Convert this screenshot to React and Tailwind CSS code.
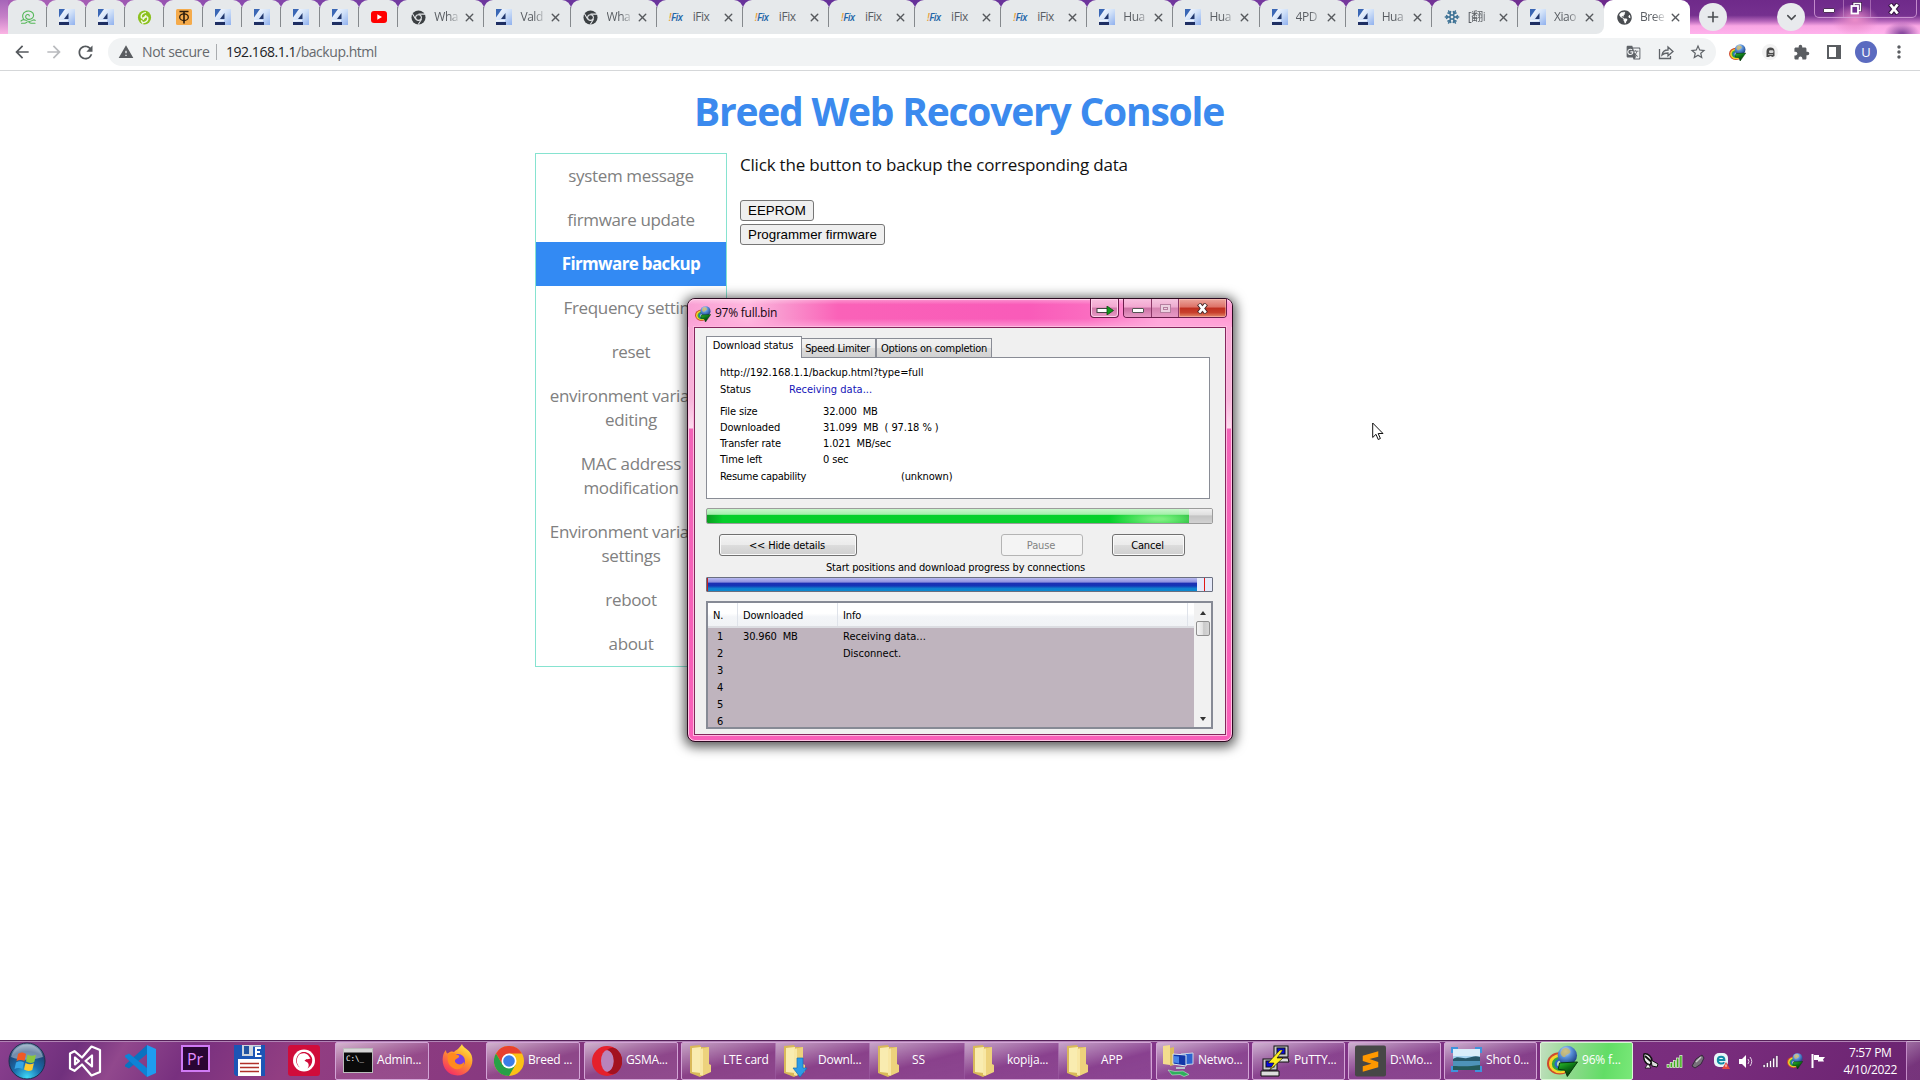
import React from "react";
import { MdArrowBack, MdArrowForward, MdRefresh, MdWarning, MdStarBorder, MdExtension, MdMoreVert, MdGTranslate } from "react-icons/md";
import { FaGlobeAmericas } from "react-icons/fa";
import { X, Plus, ChevronDown, Snowflake } from "lucide-react";

const UI = "font-['Open_Sans','Noto_Sans','Noto_Sans_CJK_SC',sans-serif]";
const DLG = "font-['DejaVu_Sans_Condensed','DejaVu_Sans',sans-serif]";

/* ---------- favicons ---------- */
function FourPda() {
  return (
    <svg width="16" height="16" viewBox="0 0 16 16">
      <defs>
        <linearGradient id="pda" x1="0" y1="0" x2="1" y2="1">
          <stop offset="0" stopColor="#ffffff" />
          <stop offset="0.5" stopColor="#cfe0f8" />
          <stop offset="1" stopColor="#8fb0ee" />
        </linearGradient>
      </defs>
      <rect width="16" height="16" fill="url(#pda)" />
      <path d="M0 0h6L0 8.500z" fill="#3a67b5" />
      <path d="M9.500 4v6H5z" fill="#22386e" />
      <path d="M0 11h9V12.500H0z" fill="#eef4fd" />
      <path d="M0 13h10v3H0z" fill="#1f2f63" />
    </svg>
  );
}
function GreyChrome() {
  return (
    <svg width="15" height="15" viewBox="0 0 16 16">
      <circle cx="8" cy="8" r="7.500" fill="#3c4043" />
      <circle cx="8" cy="8" r="3.600" fill="#e8eaed" />
      <circle cx="8" cy="8" r="2.500" fill="#3c4043" />
      <path d="M8 4.400h7M5 9.900 1.600 4M11.200 9.800 7.700 15.500" stroke="#e8eaed" strokeWidth="1.100" />
    </svg>
  );
}
function IFix() {
  return (
    <span className={`${UI} w-[17px] text-[10px] leading-4 font-semibold italic tracking-[-0.5px] whitespace-nowrap text-[#1f66a8]`}>
      <span className="text-[#e8a33a]">!</span>Fix
    </span>
  );
}
function GreenSnail() {
  return (
    <svg width="16" height="14" viewBox="0 0 16 14" fill="none" stroke="#56b85a" strokeWidth="1.100" strokeLinecap="round">
      <path d="M1 11c1.500-1.600 3.500-1.600 5-.6 2 1.300 4.500 1.300 6.500 0 1-.7 2-.7 2.700 0M1.500 13.200h3.500l2-1M15 13.200h-4l-2-.7M3.500 9C2 6.500 2.500 2.500 6 1.400 10 .3 13.500 2 13.600 5c.1 2.500-2 4.500-4.600 4.400-2.600 0-4-2.200-3-3.900 1-1.500 3.200-1.200 3.300.4" />
    </svg>
  );
}
function GreenSwirl() {
  return (
    <svg width="15" height="15" viewBox="0 0 16 16">
      <ellipse cx="8" cy="8" rx="7" ry="7.500" fill="#8cc11f" />
      <path d="M9.500 2.500C6 3 4 5 4.500 7.500S9 8 9.500 5.500M6.500 13.500c3.500-.5 5.500-2.500 5-5S7 8 6.500 10.500M4.500 11l2 3.500" fill="none" stroke="#f4f9e6" strokeWidth="1.500" />
    </svg>
  );
}
function OrangeT() {
  return (
    <svg width="16" height="16" viewBox="0 0 16 16">
      <rect width="16" height="16" rx="1.500" fill="#f5ab4b" />
      <path d="M3.500 2.500h9M8 2.500v12" stroke="#2b1c0c" strokeWidth="1.600" />
      <ellipse cx="8" cy="8.200" rx="4.300" ry="3.400" fill="none" stroke="#2b1c0c" strokeWidth="1.300" />
    </svg>
  );
}
function YouTube() {
  return (
    <svg width="16" height="12" viewBox="0 0 16 12">
      <rect width="16" height="12" rx="3" fill="#f00" />
      <path d="M6.300 3.300v5.400L11 6z" fill="#fff" />
    </svg>
  );
}
function Idm({ size = 16 }) {
  return (
    <svg width={size} height={size} viewBox="0 0 32 32">
      <defs>
        <radialGradient id="globe" cx="0.4" cy="0.28" r="0.8">
          <stop offset="0" stopColor="#e3efff" />
          <stop offset="0.4" stopColor="#5b93da" />
          <stop offset="1" stopColor="#0f2f74" />
        </radialGradient>
        <linearGradient id="arrow" x1="0" y1="0" x2="0.6" y2="1">
          <stop offset="0" stopColor="#2fc52f" />
          <stop offset="0.5" stopColor="#0d7416" />
          <stop offset="1" stopColor="#03300a" />
        </linearGradient>
      </defs>
      <ellipse cx="13" cy="18.500" rx="13" ry="11.500" fill="#cf4a2c" />
      <ellipse cx="13.500" cy="18.700" rx="11.400" ry="9.900" fill="#f2d62c" />
      <ellipse cx="14" cy="19" rx="9" ry="7.500" fill="#35a83f" />
      <ellipse cx="14.500" cy="19" rx="6.800" ry="5.500" fill="#2a68c8" />
      <ellipse cx="15" cy="19" rx="4.800" ry="3.700" fill="#b9dcb9" />
      <circle cx="21" cy="10.300" r="10" fill="url(#globe)" />
      <path d="M16 3.500c4-2 7 0 8 2.500s-4 2.500-5 5-5-.5-5-3.500z" fill="#c9b766" opacity=".8" />
      <path d="M13 18l18.500-1L21 32l-2.500-6.500-7-1z" fill="url(#arrow)" stroke="#06380a" strokeWidth="1" />
    </svg>
  );
}

/* ---------- tab strip ---------- */
const pinned = [GreenSnail, FourPda, FourPda, GreenSwirl, OrangeT, FourPda, FourPda, FourPda, FourPda, YouTube];
const tabs = [
  [GreyChrome, "Wha"], [FourPda, "Vald"], [GreyChrome, "Wha"],
  [IFix, "iFix"], [IFix, "iFix"], [IFix, "iFix"], [IFix, "iFix"], [IFix, "iFix"],
  [FourPda, "Hua"], [FourPda, "Hua"], [FourPda, "4PD"], [FourPda, "Hua"],
  [() => <Snowflake size={16} strokeWidth={2.500} color="#3f7396" />, "[翻i"], [FourPda, "Xiao"],
];

function Tab({ Icon, text, active }) {
  return (
    <div className={`relative flex h-full w-[86.14px] flex-none items-center rounded-t-[9px] pl-3 ${active ? "bg-white" : "bg-[#e6e9eb]"}`}>
      <span className="flex w-4 flex-none justify-center"><Icon /></span>
      <span className={`ml-2 w-[27px] flex-none text-[12px] tracking-[-0.45px] whitespace-nowrap text-[#5a5e63] ${text === "iFix" ? "" : "[mask-image:linear-gradient(to_right,black_50%,transparent_100%)]"}`}>{text}</span>
      <X size={13} strokeWidth={2.600} className="ml-[2px] flex-none text-[#56595d]" />
    </div>
  );
}
const Sep = () => <span className="absolute top-[7px] right-0 h-5 w-px bg-[#85898d]" />;

function TabStrip() {
  return (
    <div className="flex h-[34px] bg-[linear-gradient(90deg,#a85fb5_0,#a45cb4_90px,#8a4aae_240px,#6f389f_420px,#653099_900px,#77399f_1300px,#6d2a8c_1600px,#6f2b8a_1920px)]">
      <div className="h-full w-2 flex-none bg-[linear-gradient(180deg,#a565b8,#c680c8_50%,#fbb4e4)]" />
      {pinned.map((Icon, i) => (
        <div key={i} className="relative flex h-full w-[39.04px] flex-none items-center justify-center rounded-t-[9px] bg-[#e6e9eb]">
          <Icon />
          <Sep />
        </div>
      ))}
      {tabs.map(([Icon, text], i) => (
        <div key={i} className={`relative h-full ${i === 13 ? "bg-[linear-gradient(180deg,transparent_60%,white_60%)]" : ""}`}>
          <div className={`h-full ${i === 13 ? "overflow-hidden rounded-br-[8px]" : ""}`}><Tab Icon={Icon} text={text} /></div>
          {i < 13 && <Sep />}
        </div>
      ))}
      <Tab active Icon={() => <FaGlobeAmericas size={15} color="#4a4d51" />} text="Bree" />
      <div className="flex h-full grow items-start bg-[radial-gradient(ellipse_24px_16px_at_165px_20px,#e88ac8_5%,transparent),radial-gradient(ellipse_18px_12px_at_212px_34px,#8a4aa0_10%,transparent),linear-gradient(180deg,#6f2a8a_0,#75308f_45%,#b565ba_62%,#f9a6e4_76%,#ffb2ec_100%)]">
        <span className="mt-[3px] ml-[9px] flex size-7 flex-none items-center justify-center rounded-full bg-[#e8eaed] text-[#4a4d51]"><Plus size={16} strokeWidth={2.400} /></span>
        <span className="mt-[3px] ml-[50px] flex size-7 flex-none items-center justify-center rounded-full bg-[#e8eaed] text-[#4a4d51]"><ChevronDown size={15} strokeWidth={2.400} /></span>
        <span className="ml-[9px] flex h-[18px] w-[103px] flex-none rounded-b-[5px] border border-t-0 border-[#d9a3dc]/80 text-white">
          <span className="flex w-[29px] items-start justify-center border-r border-[#c58cc9]/60 pt-2"><span className="h-[5px] w-3 rounded-[1px] border border-[#50305a] bg-white" /></span>
          <span className="flex w-[27px] items-center justify-center border-r border-[#c58cc9]/60 pr-[3px]">
            <svg width="12" height="13" viewBox="0 0 12 13" fill="none"><path d="M4 4V1h7v7H8" stroke="#3a1846" strokeWidth="3" /><path d="M4 3.500V1.500h6.500v7H8" stroke="#fff" strokeWidth="1.400" /><rect x="1.500" y="4" width="6.500" height="7.500" fill="#6d2a8c" stroke="#fff" strokeWidth="1.800" /></svg>
          </span>
          <span className="flex grow items-center justify-center">
            <svg width="14" height="12" viewBox="0 0 14 12"><path d="M3 1l8 10M11 1L3 11" stroke="#3a1846" strokeWidth="5" /><path d="M3.400 1.500l7.200 9M10.600 1.500l-7.200 9" stroke="#fff" strokeWidth="2.800" /></svg>
          </span>
        </span>
      </div>
    </div>
  );
}

function Toolbar() {
  return (
    <div className="flex h-[37px] items-center border-b border-[#d5d7d9] bg-white">
      <div className="flex w-[108px] flex-none items-center pl-[12px] text-[#55595d]">
        <MdArrowBack size={20} />
        <MdArrowForward size={20} className="ml-3 text-[#b9bbbe]" />
        <MdRefresh size={21} className="ml-[11px]" />
      </div>
      <div className="flex h-7 w-[1608px] flex-none items-center rounded-full bg-[#f1f3f4] text-[14px] text-[#66696d]">
        <MdWarning size={16} className="ml-[10px] text-[#5a5d61]" />
        <span className="ml-2 w-[67px] pb-px tracking-[-0.35px] whitespace-nowrap">Not secure</span>
        <span className="ml-[7px] h-4 w-px bg-[#a9acaf]" />
        <span className="ml-[9px] pb-px tracking-[-0.46px]"><span className="text-[#202124]">192.168.1.1</span>/backup.html</span>
        <span className="grow" />
        <MdGTranslate size={15} className="text-[#5f6368]" />
        <svg className="ml-[17px]" width="16" height="15" viewBox="0 0 16 15" fill="none" stroke="#5f6368" strokeWidth="1.300"><path d="M1.500 4v9.500h11V11M4 10c.5-3.500 2.500-5 6-5V2l5 4.500-5 4.300V8C7.500 8 5.500 8.500 4 10z" /></svg>
        <MdStarBorder size={18} className="mr-[9px] ml-[15px] text-[#5f6368]" />
      </div>
      <div className="flex grow items-center text-[#5a5d61]">
        <span className="ml-[13px]"><Idm size={17} /></span>
        <span className="ml-[16px] flex size-4 items-center justify-center rounded-full bg-[#f2f2f2]">
          <svg width="9" height="10" viewBox="0 0 9 10"><path d="M.5 10V4.500a4 4 0 018 0V9l-2 1-2-1-2 1z" fill="#4b4b4b" /><rect x="3" y="3.300" width="4.500" height="2.600" rx="1.200" fill="#d7d7d7" /><path d="M2 7.500h5" stroke="#bbb" strokeWidth=".8" /></svg>
        </span>
        <MdExtension size={17} className="ml-[15px]" />
        <span className="ml-[17px] h-[14px] w-[14px] border-2 border-r-[5px] border-[#5a5d61]" />
        <span className="ml-[14px] flex size-[22px] items-center justify-center rounded-full bg-[#5b6bc0] text-[13px] leading-none text-white">U</span>
        <MdMoreVert size={20} className="ml-[12px]" />
      </div>
    </div>
  );
}

/* ---------- page ---------- */
const menu = [
  ["system message"], ["firmware update"], ["Firmware backup"], ["Frequency setting"], ["reset"],
  ["environment variable", "editing"], ["MAC address", "modification"], ["Environment variable", "settings"],
  ["reboot"], ["about"],
];

function Page() {
  return (
    <div className="h-[969px] bg-white">
      <h1 className="flex h-[82px] items-center justify-center pr-[2px] pb-[2px] text-[39px] font-bold tracking-[-1.22px] whitespace-nowrap text-[#3b8aee]">Breed Web Recovery Console</h1>
      <div className="mx-auto flex w-[850px]">
        <nav className="w-[192px] flex-none border border-[#86e3d0] text-center text-[17px] leading-6 text-[#808080]">
          {menu.map((lines, i) => (
            <div key={i} className={`flex flex-col items-center py-[10px] whitespace-nowrap ${i === 2 ? "bg-[#338af3] font-bold tracking-[-0.65px] text-white" : "tracking-[-0.35px]"}`}>
              {lines.map((l) => <span key={l}>{l}</span>)}
            </div>
          ))}
        </nav>
        <main className="ml-[13px] flex flex-col items-start">
          <p className="text-[17px] leading-6 tracking-[-0.2px] whitespace-nowrap text-[#111]">Click the button to backup the corresponding data</p>
          <button className="mt-[23px] h-[21px] rounded-[3px] border border-[#767676] bg-[#efefef] px-[7px] font-['Liberation_Sans',sans-serif] text-[13.33px] leading-[18px]">EEPROM</button>
          <button className="mt-[3px] h-[21px] rounded-[3px] border border-[#767676] bg-[#efefef] px-[7px] font-['Liberation_Sans',sans-serif] text-[13.33px] leading-[18px]">Programmer firmware</button>
        </main>
      </div>
    </div>
  );
}

/* ---------- download dialog ---------- */
function Row({ label, value, className = "", labelClass = "w-[103px]", valueClass = "" }) {
  return (
    <div className={`flex h-4 items-center whitespace-pre ${className}`}>
      <span className={`flex-none ${labelClass}`}>{label}</span>
      <span className={valueClass}>{value}</span>
    </div>
  );
}

const dlgButton = "flex h-[22px] flex-none items-center justify-center rounded-[3px] border bg-[linear-gradient(180deg,#f3f3f3_0,#ebebeb_48%,#dcdcdc_52%,#cfcfcf_100%)] pt-[2px] pr-[2px] shadow-[inset_0_0_0_1px_#fafafa]";

function Dialog() {
  return (
    <div className="absolute top-[298px] left-[687px] flex h-[444px] w-[546px] flex-col rounded-[8px] border border-[#2b0a20] bg-[#f95fb9] bg-[linear-gradient(180deg,#f9a2d3_0,#f7b5da_100px,#fbdcee_129px,#f264b8_130px,#f95fb9_100%)] shadow-[0_2px_12px_3px_rgba(0,0,0,0.65),inset_0_0_0_1px_#ffc3e4]">
      <div className="flex h-[28px] flex-none items-start rounded-t-[7px] bg-[linear-gradient(180deg,rgba(255,255,255,.35)_0,transparent_20%,transparent_70%,rgba(255,170,220,.7)_100%),linear-gradient(90deg,#f99fd3_0,#ffb8df_60px,#f99bd0_90px,#fa62b8_150px,#f95bb9_340px,#fb6cc0_400px,#ffa6da_470px,#ff9bd3_100%)] pl-[7px] shadow-[inset_0_1px_0_#ffd3ea]">
        <span className="mt-[7px]"><Idm size={16} /></span>
        <span className="mt-[5px] ml-[4px] grow text-[12px] leading-[18px] tracking-[-0.25px] text-[#14060f]">97% full.bin</span>
        <span className="flex h-[19px] w-[29px] items-center justify-center rounded-b-[4px] border border-t-0 border-[#6c1c4c] bg-[linear-gradient(180deg,#f8c0df,#f2a6d0_45%,#d07aa9_50%,#e899c5)] pt-[5px] pl-px shadow-[inset_0_0_0_1px_#ffd0ea]">
          <svg width="18" height="9" viewBox="0 0 18 9"><rect x="1" y="2.500" width="11" height="4" fill="#fff" stroke="#444" /><path d="M11 0l6.500 4.500L11 9z" fill="#0f9a1a" stroke="#0a4d10" strokeWidth=".8" /></svg>
        </span>
        <span className="mr-[5px] ml-[4px] flex h-[19px] w-[104px] overflow-hidden rounded-b-[4px] border border-t-0 border-[#6c1c4c]">
          <span className="flex w-[28px] items-center justify-center border-r border-[#8c3868] bg-[linear-gradient(180deg,#f8c0df,#f2a6d0_45%,#c96fa2_50%,#e899c5)] pt-1"><span className="h-[5px] w-3 rounded-[1px] border border-[#555] bg-white" /></span>
          <span className="flex w-[27px] items-center justify-center border-r border-[#8c3868] bg-[linear-gradient(180deg,#f6c6e0,#edabcf_45%,#d583b0_50%,#e899c5)]"><span className="flex h-[9px] w-[11px] items-center justify-center border border-[#b57f9f] bg-[#ecd0e0]"><span className="h-[3px] w-[5px] border border-[#b57f9f]" /></span></span>
          <span className="flex grow items-center justify-center bg-[linear-gradient(180deg,#eca59d_0,#dd7166_45%,#bf2f20_50%,#c8402d_75%,#e58a6d_100%)] shadow-[inset_0_0_0_1px_rgba(255,200,190,.5)]">
            <svg width="13" height="11" viewBox="0 0 14 12"><path d="M3 1l8 10M11 1L3 11" stroke="#4a2a2a" strokeWidth="5" /><path d="M3.400 1.500l7.200 9M10.600 1.500l-7.200 9" stroke="#fff" strokeWidth="2.800" /></svg>
          </span>
        </span>
      </div>
      <div className={`${DLG} mx-[6px] mb-[6px] flex grow flex-col border border-[#83265c] bg-[#f0f0f0] px-[11px] text-[11px] tracking-[-0.15px] text-black shadow-[0_0_0_1px_#ffb9e0]`}>
        <div className="mt-[8px] flex h-[21px] flex-none items-end whitespace-nowrap">
          <span className="relative z-10 -mb-px flex h-[22px] w-[96px] items-center justify-center border border-b-0 border-[#898c95] bg-white pr-[2px] pb-[2px]">Download status</span>
          <span className="flex h-[19px] w-[74px] items-center justify-center border border-b-0 border-l-0 border-[#898c95] bg-[linear-gradient(180deg,#f2f2f2,#ebebeb_50%,#dcdcdc_50%,#d2d2d2)] pt-[2px] pr-[2px] tracking-[-0.32px]">Speed Limiter</span>
          <span className="flex h-[19px] w-[116px] items-center justify-center border border-b-0 border-[#898c95] bg-[linear-gradient(180deg,#f2f2f2,#ebebeb_50%,#dcdcdc_50%,#d2d2d2)] pt-[2px] tracking-[-0.28px]">Options on completion</span>
        </div>
        <div className="flex h-[142px] w-[504px] flex-none flex-col border border-[#898c95] bg-white pt-[7px] pl-[13px]">
          <Row label="http://192.168.1.1/backup.html?type=full" className="tracking-[-0.06px]" />
          <Row label="Status" value="Receiving data..." className="mt-px" labelClass="w-[69px]" valueClass="tracking-[0.02px] text-[#1414b8]" />
          <Row label="File size" value="32.000  MB" className="mt-[6px]" />
          <Row label="Downloaded" value="31.099  MB  ( 97.18 % )" valueClass="tracking-[-0.08px]" />
          <Row label="Transfer rate" value="1.021  MB/sec" />
          <Row label="Time left" value="0 sec" />
          <Row label="Resume capability" value="(unknown)" className="mt-px" labelClass="w-[181px] tracking-[-0.28px]" />
        </div>
        <div className="mt-[9px] flex h-[16px] w-[507px] flex-none overflow-hidden rounded-[2px] border border-[#9c9c9c]">
          <div className="w-[482px] bg-[linear-gradient(180deg,#c9f7cc_0,#a5efab_38%,transparent_45%),radial-gradient(ellipse_50px_12px_at_452px_10px,#7dee80_10%,transparent),linear-gradient(90deg,#0a9e20_0,#06cf2b_16px,#06d12c_460px,#12b02c_100%)]" />
          <div className="grow bg-[linear-gradient(180deg,#f0f0f0_0,#e0e0e0_40%,#c4c4c4_50%,#d2d2d2_100%)]" />
        </div>
        <div className="mt-[10px] flex h-[22px] flex-none pl-[13px]">
          <span className={`${dlgButton} w-[138px] border-[#707070]`}>&lt;&lt; Hide details</span>
          <span className="ml-[144px] flex h-[22px] w-[82px] flex-none items-center justify-center rounded-[3px] border border-[#b4b4b4] bg-[#f4f4f4] pt-[2px] pr-[2px] text-[#838383]">Pause</span>
          <span className={`${dlgButton} ml-[29px] w-[73px] border-[#707070]`}>Cancel</span>
        </div>
        <div className="flex h-[21px] flex-none items-center pt-[3px] pl-[120px] tracking-[-0.18px] whitespace-nowrap">Start positions and download progress by connections</div>
        <div className="flex h-[15px] w-[507px] flex-none overflow-hidden rounded-[1px] border border-[#6a6f80]">
          <div className="w-[490px] flex-none border-l border-[#c02020] bg-[linear-gradient(180deg,#b9baf0_0,#8f92e0_30%,#1c30b4_42%,#1436b6_60%,#0f7fcf_80%,#0b8ad0_100%)]" />
          <div className="flex w-[15px] flex-none bg-[#e6eafa] pl-[7px]"><span className="w-px flex-none bg-[#e01818]" /></div>
        </div>
        <div className="mt-[9px] flex h-[128px] w-[507px] flex-none border-2 border-[#868a95] bg-[#bfb4be]">
          <div className="flex w-[486px] flex-none flex-col overflow-hidden">
            <div className="flex h-[25px] flex-none items-center border-b-2 border-[#dcdde2] bg-[linear-gradient(180deg,#ffffff_0,#ffffff_45%,#f3f5f8_60%,#f1f3f6_100%)]">
              <span className="flex h-full w-[30px] items-center border-r border-[#dfe3ea] pt-[3px] pl-[5px]">N.</span>
              <span className="flex h-full w-[100px] items-center border-r border-[#dfe3ea] pt-[3px] pl-[5px]">Downloaded</span>
              <span className="flex h-full w-[350px] items-center border-r border-[#dfe3ea] pt-[3px] pl-[5px]">Info</span>
            </div>
            {[["30.960  MB", "Receiving data..."], ["", "Disconnect."], [], [], [], []].map(([a, b], i) => (
              <div key={i} className="flex h-[17px] flex-none items-center pt-[2px] whitespace-pre">
                <span className="w-[35px] pl-[9px]">{i + 1}</span>
                <span className="w-[100px]">{a}</span>
                <span className="tracking-normal">{b}</span>
              </div>
            ))}
          </div>
          <div className="flex grow flex-col items-center justify-between bg-[#f1f1f1]">
            <div className="flex flex-col items-center">
              <span className="mt-2 h-0 w-0 border-x-[3px] border-b-4 border-x-transparent border-b-[#333]" />
              <span className="mt-[6px] h-[15px] w-[14px] rounded-[2px] border border-[#8f8f8f] bg-[linear-gradient(90deg,#f3f3f3,#e4e4e4_45%,#cacaca_55%,#d6d6d6)]" />
            </div>
            <span className="mb-[6px] h-0 w-0 border-x-[3px] border-t-4 border-x-transparent border-t-[#333]" />
          </div>
        </div>
      </div>
    </div>
  );
}

/* ---------- taskbar icons ---------- */
function StartOrb() {
  return (
    <svg width="38" height="38" viewBox="0 0 38 38">
      <defs>
        <radialGradient id="orb" cx="0.5" cy="0.95" r="0.95">
          <stop offset="0" stopColor="#3fd8f7" /><stop offset="0.4" stopColor="#1a6fae" /><stop offset="0.75" stopColor="#1d4577" /><stop offset="1" stopColor="#86a4bd" />
        </radialGradient>
      </defs>
      <circle cx="19" cy="19" r="18" fill="url(#orb)" stroke="#1c2f4c" />
      <path d="M3 15a16.500 16.500 0 0132 0c-9 3-23 4-32 0z" fill="#fff" opacity=".38" />
      <path d="M10 12c3-2 5-2 8 0l-1.500 7c-3-1.500-5-1.500-8 0z" fill="#ef5a24" />
      <path d="M19.500 12.500c3 1.700 5.500 1.700 8.500.2L26.300 20c-3 1.500-5.500 1.200-8.300-.5z" fill="#8cc63f" />
      <path d="M8 20.500c3-1.800 5-1.800 8 0L14.500 27c-3-1.500-5-1.500-8 0z" fill="#35a4e6" />
      <path d="M17.500 21c3 1.700 5.500 1.700 8.400.3L24.300 28c-3 1.500-5.500 1.200-8.300-.5z" fill="#fdc92e" />
    </svg>
  );
}
function VStudio() {
  return (
    <svg width="34" height="32" viewBox="0 0 34 32" fill="none" stroke="#fff" strokeWidth="2.200" strokeLinejoin="round">
      <path d="M2 8.500l4.500-2.300L14 12.500 23.500 1.500 32 5v22l-8.500 3.500L14 19.500l-7.500 6.300L2 23.500z" />
      <path d="M7 12.500v7l4-3.500zM24 10.500v11L17.500 16z" />
    </svg>
  );
}
function VSCode() {
  return (
    <svg width="32" height="32" viewBox="0 0 32 32">
      <path d="M23 0l9 4v24l-9 4z" fill="#1f9cf0" />
      <path d="M23 0v9L5 23.500 1 21.500V20z" fill="#0a72c0" />
      <path d="M23 32v-9L5 8.500 1 10.500V12z" fill="#0e83d6" />
    </svg>
  );
}
function Premiere() {
  return <span className={`${UI} mb-[4px] flex h-[27px] w-[29px] items-center justify-center border-2 border-[#d07af5] bg-[#2a0634] text-[16px] leading-none text-[#e08cff]`}>Pr</span>;
}
function Floppy() {
  return (
    <svg width="31" height="32" viewBox="0 0 31 32">
      <path d="M0 0h31v31H2l-2-2z" fill="#1c55b5" />
      <path d="M8 0h19v11H8z" fill="#cfd4dc" /><path d="M10 1h5v8h-5z" fill="#2454a0" />
      <rect x="4" y="14" width="23" height="17" fill="#fff" />
      <path d="M6 18.500h19M6 22.500h19M6 26.500h19" stroke="#b0302a" strokeWidth="1.300" />
      <path d="M19 1.500h9.500v11H19z" fill="#1c55b5" />
      <path d="M27 3h-5v8h5.500M22 7h4" stroke="#fff" strokeWidth="2" fill="none" />
    </svg>
  );
}
function RedGriffin() {
  return (
    <svg width="32" height="31" viewBox="0 0 32 31">
      <rect width="32" height="31" rx="3" fill="#d00c3a" />
      <circle cx="16" cy="15.500" r="11" fill="#fff" />
      <path d="M13 7.500c5-1.500 9.500 1 11 5.500.8 4-.5 8-4.500 10.500 1.500-2 1.500-4 .5-5.500-1-1.300-2.500-1-3.500-2.500l3-2-3.500-2c-3 0-5 2.500-5.500 5.500-.3 2 .3 4 1.500 5.500C7 20 6.500 11 13 7.500z" fill="#d00c3a" />
      <path d="M12 9c3-1.500 6-1 8 1l2.500 3.500-3 .8-3.500-1.800c-2.500.5-4 2.500-4.500 5l.5 5C7.500 19 8 12 12 9z" fill="#fff" />
    </svg>
  );
}
function Cmd() {
  return (
    <svg width="30" height="25" viewBox="0 0 30 25">
      <rect x=".5" y=".5" width="29" height="24" fill="#0a0a0a" stroke="#bbb" />
      <rect x="1" y="1" width="28" height="3.500" fill="#d5d5d5" />
      <text x="3" y="13" fill="#fff" fontSize="7.500" fontFamily="DejaVu Sans Mono, monospace">C:\_</text>
    </svg>
  );
}
function Firefox() {
  return (
    <svg width="31" height="32" viewBox="0 0 31 32">
      <defs><linearGradient id="ff" x1="0.8" y1="0" x2="0.2" y2="1"><stop offset="0" stopColor="#fff04a" /><stop offset="0.4" stopColor="#ff9a2a" /><stop offset="1" stopColor="#f5256a" /></linearGradient></defs>
      <path d="M20 0c1 4 7 5 9.500 11C33 21 26 31.500 15.500 31.500S-1 22 1 12c.5-3 2-5 3-6 0 2 .5 3 1.500 3.500C8 7 11 7 12 8c2-2 5-3 8-8z" fill="url(#ff)" />
      <circle cx="16" cy="17" r="7" fill="#7a3fe0" />
      <path d="M6 11c4-3 7-2 9 0 2.500 0 3 2 1 3-3 1-4 3-2 5s6 2 8-1c1 6-6 9-11 6S5 16 6 11z" fill="#ff8a1e" />
    </svg>
  );
}
function Chrome() {
  return (
    <svg width="30" height="30" viewBox="0 0 30 30">
      <circle cx="15" cy="15" r="15" fill="#fbc116" />
      <path d="M15 7.500h13A15 15 0 002 7.500l6.500 11.200z" fill="#e8402f" />
      <path d="M2 7.500A15 15 0 0015 30l6.500-11.300L8.500 18.700z" fill="#28a048" />
      <circle cx="15" cy="15" r="7.500" fill="#fff" /><circle cx="15" cy="15" r="5.800" fill="#3b7de8" />
    </svg>
  );
}
function Opera() {
  return (
    <svg width="30" height="30" viewBox="0 0 30 30">
      <ellipse cx="15" cy="15" rx="15" ry="15" fill="#e5202c" /><ellipse cx="15.500" cy="15" rx="6.500" ry="11" fill="#b983bb" />
      <path d="M15 4c4-3 8-3 11 .5a15 15 0 010 21C23 29 19 29 15 26c9-2 9-20 0-22z" fill="#a31220" />
    </svg>
  );
}
function Folder({ arrow }) {
  return (
    <svg width="25" height="32" viewBox="0 0 25 32">
      <path d="M1 1l10-1 1 2 8 0v25l-9 5L1 28z" fill="#d9b95a" />
      <path d="M3 3l9-1v26l-9-1z" fill="#f9ecb0" />
      <path d="M11 4l9-2v17l2 1v7l-9 4-2-1z" fill="#edd27c" />
      <path d="M11 4l3-.6v26.800L11 30z" fill="#f8e7a4" />
      {arrow && <path d="M14 13h6v10h4l-7 9-7-9h4z" fill="#2c9be6" stroke="#1670b4" strokeWidth=".7" />}
    </svg>
  );
}
function Network() {
  return (
    <svg width="31" height="32" viewBox="0 0 31 32">
      <path d="M0 1l7-1v20l-7-1z" fill="#f3dc8d" /><path d="M7 3l4-1v18l-4 1z" fill="#dcbc5d" />
      <path d="M18 9l12-1v11l-12 1z" fill="#2c62d0" stroke="#c9d6e6" /><path d="M10 9l13 1v11l-13-2z" fill="#1236a8" stroke="#e1e8f0" />
      <path d="M11 11l5 .5v7l-5-1z" fill="#4a86e8" />
      <path d="M13 22h9v2h-9z" fill="#b9c3cd" /><path d="M5 25l7 1.500 8-.5 6 3.500-5 2-4-2-8 .5z" fill="#2eb05d" stroke="#bfe6cd" strokeWidth=".6" />
    </svg>
  );
}
function Putty() {
  return (
    <svg width="30" height="32" viewBox="0 0 30 32" stroke="#111">
      <rect x="14" y="1" width="14" height="11" fill="#c8c8c8" /><rect x="17" y="3" width="8" height="6" fill="#0a0ae0" /><path d="M13 13h15l1 4H14z" fill="#ddd" />
      <rect x="3" y="14" width="14" height="11" fill="#c8c8c8" /><rect x="6" y="16" width="8" height="6" fill="#0a0ae0" /><path d="M1 26h18v5H1z" fill="#ddd" />
      <path d="M20 5L8 18l6 0-5 8 14-13h-6l6-8z" fill="#ffef20" strokeWidth=".6" />
    </svg>
  );
}
function Sublime() {
  return (
    <svg width="32" height="32" viewBox="0 0 32 32">
      <rect width="32" height="32" rx="2" fill="#474747" />
      <path d="M24 6v5.500L15 14l9 3v5.500L8 27v-5.500l9-2.700L8 16v-5.500z" fill="#ff9800" />
    </svg>
  );
}
function Shot() {
  return (
    <svg width="31" height="25" viewBox="0 0 31 25" className="mb-[3px]">
      <rect x="2" y="2" width="27" height="21" fill="#a9d6f2" /><path d="M2 2h27v7H2z" fill="#d9eefa" /><path d="M2 12c5-4 9 0 14-1s8-3 13-1v4H2z" fill="#27596b" /><path d="M2 14h27v9H2z" fill="#4e93b9" /><path d="M2 19c8 0 14 1 27-1v5H2z" fill="#245a5a" />
      <path d="M1 6V1h6M24 1h6v5M30 19v5h-6M7 24H1v-5" fill="none" stroke="#3f93dc" strokeWidth="2" />
    </svg>
  );
}

function TaskButton({ Icon, text, w, green }) {
  return (
    <div className={`flex h-[38px] flex-none items-center rounded-[2px] border pl-[6px] text-white ${w} ${green ? "border-[#d9f7d4] bg-[linear-gradient(100deg,#c3dfc0_0,#8fd98d_35%,#62dd66_70%,#7ae879_100%)]" : "border-[#d3a4d6] bg-[linear-gradient(165deg,rgba(255,255,255,.62)_0,rgba(255,255,255,.3)_30%,rgba(255,255,255,.08)_55%,rgba(255,255,255,.1)_100%)]"}`}>
      <span className="flex w-[31px] flex-none justify-center"><Icon /></span>
      <span className="ml-[4px] pb-[2px] text-[12px] tracking-[-0.2px] whitespace-nowrap">{text}</span>
    </div>
  );
}

const pins = [[StartOrb, "w-[54px]"], [VStudio, "w-[62px]"], [VSCode, "w-[48px]"], [Premiere, "w-[62px]"], [Floppy, "w-[46px]"], [RedGriffin, "w-[63px]"]];
const folders = [["LTE card", "w-[94px]", "ml-[9px]"], ["Downl...", "w-[94px]", "ml-[10px]", true], ["SS", "w-[95px]", "ml-[10px]"], ["kopija...", "w-[94px]", "ml-[10px]"], ["APP", "w-[92px]", "ml-[10px]"]];

function Bars({ fill, stroke }) {
  return (
    <svg width="17" height="13" viewBox="0 0 17 13" fill={fill} stroke={stroke} strokeWidth=".7">
      <rect x="1" y="9.500" width="2.200" height="3" /><rect x="4.200" y="7.500" width="2.200" height="5" /><rect x="7.400" y="5.500" width="2.200" height="7" /><rect x="10.600" y="3" width="2.200" height="9.500" /><rect x="13.800" y=".5" width="2.200" height="12" />
    </svg>
  );
}

function Tray() {
  return (
    <div className="flex h-full grow items-center">
      <div className="ml-[5px] flex h-full items-center pt-px">
        {[
          <svg key="a" width="17" height="16" viewBox="0 0 17 16"><path d="M2 1c4-1 8 3 8 7l-2 4C3 11 1 6 2 1z" fill="#f2f2f2" stroke="#111" strokeWidth="1.500" /><path d="M3 3l10 9" stroke="#111" strokeWidth="2" /><path d="M6 11l-3 4h6z" fill="#fff" stroke="#111" strokeWidth=".8" /><path d="M9 7l7 4-1 3-5-1z" stroke="#111" fill="#ddd" /></svg>,
          <Bars key="b" fill="#3fae1a" stroke="#e6f8dc" />,
          <svg key="c" width="14" height="15" viewBox="0 0 14 15"><path d="M1 12l4-7 6-4 2 3-3 6-6 4z" fill="#77727a" stroke="#34283a" /><path d="M5 8l5-5" stroke="#ccc" strokeWidth="1.500" /></svg>,
          <svg key="d" width="16" height="16" viewBox="0 0 16 16"><rect width="14" height="14" rx="5" fill="#e9f5f8" /><path d="M3.800 7h6.600c0-4.500-6.600-4.500-6.600 0 0 4.300 5 4.300 6.400 2.200" fill="none" stroke="#128ba6" strokeWidth="2" /><path d="M12 9l4 7H8z" fill="#e5483d" /><path d="M12 11.500v2.300" stroke="#fff" /></svg>,
          <svg key="e" width="17" height="15" viewBox="0 0 17 15"><path d="M1 5h3l4-4v13l-4-4H1z" fill="#fff" /><path d="M10 5q2 2.500 0 5M12 3q3.500 4.500 0 9" fill="none" stroke="#e6d5e8" /></svg>,
          <Bars key="f" fill="#fff" stroke="#5a2260" />,
          <Idm key="g" size={16} />,
          <svg key="h" width="15" height="16" viewBox="0 0 15 16"><path d="M1.500 1v14" stroke="#fff" strokeWidth="2" /><path d="M3 2h5v2h6l-2 2.500 1 2H7V7H3z" fill="#fff" /></svg>,
        ].map((icon, i) => <span key={i} className="flex w-[24.1px] flex-none justify-center">{icon}</span>)}
      </div>
      <div className="ml-[4px] flex h-full w-[71px] flex-none flex-col items-center justify-center text-[12px] leading-[17px] tracking-[-0.35px] text-white">
        <span className="whitespace-nowrap">7:57 PM</span>
        <span className="whitespace-nowrap">4/10/2022</span>
      </div>
      <div className="ml-auto h-full w-[14px] flex-none border-l border-[#c48cc8] bg-[linear-gradient(150deg,rgba(255,255,255,.35),rgba(255,255,255,.08)_60%)]" />
    </div>
  );
}

function Taskbar() {
  return (
    <div className="flex h-[40px] items-center overflow-hidden border-t border-[#552059] bg-[#782a7c] bg-[linear-gradient(180deg,#b184b5_0,#b184b5_1px,transparent_1px),linear-gradient(120deg,#8b408f_0,#70307d_70px,#91488d_110px,#78307f_170px,#923e82_260px,#84377f_500px,#83378a_1000px,#782c7c_1500px,#6a2370_100%)]">
      {pins.map(([Icon, w], i) => <div key={i} className={`flex flex-none justify-center ${w}`}><Icon /></div>)}
      <TaskButton Icon={Cmd} text="Admin..." w="w-[94px]" />
      <div className="-mr-px flex w-[58px] flex-none justify-center pr-[2px] pb-[2px]"><Firefox /></div>
      <TaskButton Icon={Chrome} text="Breed ..." w="w-[94px]" />
      <div className="w-[4px] flex-none" />
      <TaskButton Icon={Opera} text="GSMA..." w="w-[94px]" />
      <div className="ml-[3px] flex h-[38px] w-[471px] flex-none overflow-hidden rounded-[2px] border border-[#d3a4d6]">
        {folders.map(([text, w, tc, arrow], i) => (
          <div key={i} className={`flex h-full flex-none items-center border-r border-[#9c5ea3]/60 bg-[linear-gradient(165deg,rgba(255,255,255,.55)_0,rgba(255,255,255,.28)_30%,rgba(255,255,255,.05)_55%,rgba(255,255,255,.08)_100%)] pl-[7px] text-white ${w}`}>
            <Folder arrow={arrow} />
            <span className={`${tc} pb-[2px] text-[12px] tracking-[-0.2px] whitespace-nowrap`}>{text}</span>
          </div>
        ))}
      </div>
      <div className="ml-[4px] flex gap-[3px]">
        <TaskButton Icon={Network} text="Netwo..." w="w-[93px]" />
        <TaskButton Icon={Putty} text="PuTTY..." w="w-[93px]" />
        <TaskButton Icon={Sublime} text="D:\Mo..." w="w-[93px]" />
        <TaskButton Icon={Shot} text="Shot 0..." w="w-[93px]" />
        <TaskButton green Icon={() => <Idm size={32} />} text="96% f..." w="w-[93px]" />
      </div>
      <Tray />
    </div>
  );
}

export default function App() {
  return (
    <div className={`${UI} relative flex h-[1080px] w-[1920px] flex-col overflow-hidden bg-white`}>
      <TabStrip />
      <Toolbar />
      <Page />
      <Taskbar />
      <Dialog />
      <svg className="absolute top-[422px] left-[1372px]" width="12" height="19" viewBox="0 0 12 19"><path d="M.7 1v14.500l3.300-3.200 2.200 5.200 2.200-1-2.200-5H11z" fill="#fff" stroke="#111" /></svg>
    </div>
  );
}
